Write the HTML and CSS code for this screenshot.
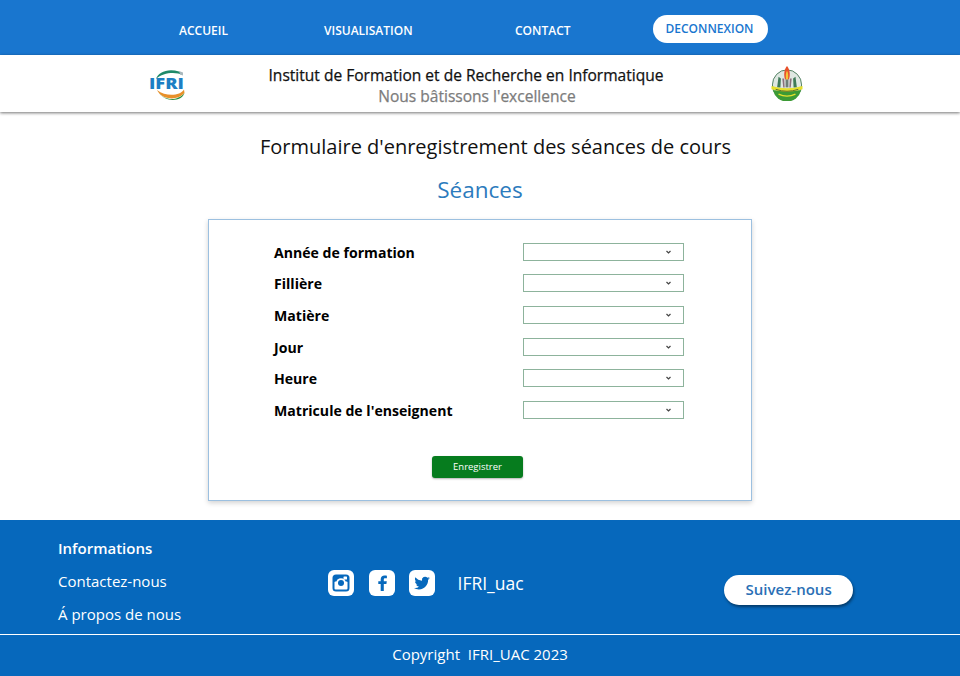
FILE: index.html
```html
<!DOCTYPE html>
<html lang="fr">
<head>
<meta charset="utf-8">
<title>Séances</title>
<link rel="stylesheet" href="styles.css">
</head>
<body>
<nav class="nav">
  <a class="nav-link">ACCUEIL</a>
  <a class="nav-link">VISUALISATION</a>
  <a class="nav-link">CONTACT</a>
  <a class="nav-btn">DECONNEXION</a>
</nav>
<header class="brand">
  <svg class="logo-ifri" width="38" height="32" viewBox="0 0 38 32">
    <path d="M8 11C10 4 20 0 31 3.500C33 4.500 34 5 35 7C27 3.500 15 4.500 8 11Z" fill="#1f8a6a"/>
    <path d="M31 3l4 1.500v3l-3-1Z" fill="#a9b8bd"/>
    <path d="M9 22C13 31 28 34 36.500 25L36 21.500C32 28 18 29 9 22Z" fill="#e8902a"/>
    <path d="M11 25C16 32 29 34 36.500 25C34 33.500 18 35 11 25Z" fill="#2f8f3e"/>
    <text class="logo-letters" x="1" y="20.500" textLength="35" lengthAdjust="spacingAndGlyphs">IFRI</text>
  </svg>
  <div class="brand-text">
    <div class="brand-name">Institut de Formation et de Recherche en Informatique</div>
    <div class="brand-motto">Nous bâtissons l'excellence</div>
  </div>
  <svg class="logo-uac" width="32" height="36" viewBox="0 0 34 37" preserveAspectRatio="none">
    <circle cx="17" cy="20.500" r="15.500" fill="#dfe8e2" stroke="#4d7d5e" stroke-width="1"/>
    <path d="M2 26h30a15.500 15.500 0 0 1-30 0Z" fill="#3c9a35"/>
    <path d="M8 12l-1.500 11h3.500l.5-9ZM26 12l1.500 11H24l-.5-9Z" fill="#3f7a58"/>
    <path d="M12 14l1 9h1.500l-.5-9ZM22 14l-1 9h-1.500l.5-9Z" fill="#8a6f7c"/>
    <path d="M17 1c3.500 4 3.500 10 2 14h-4c-1.500-4-1.500-10 2-14Z" fill="#e8502a"/>
    <path d="M17 6c1.500 2 1.500 6 1 9h-2c-.5-3-.5-7 1-9Z" fill="#f3c63a"/>
    <rect x="15.500" y="15" width="3" height="8" fill="#6e7f78"/>
    <path d="M.5 21.500q16.500 5 33 0v3.500q-16.500 5-33 0Z" fill="#e6e02e"/>
    <path d="M5 25q12 4 24 0" stroke="#5c6b2a" stroke-width="1" fill="none"/>
    <path d="M8 30q9 4 18 0" stroke="#e6e02e" stroke-width="1.500" fill="none"/>
  </svg>
</header>
<main class="main">
  <h1 class="title">Formulaire d'enregistrement des séances de cours</h1>
  <h2 class="subtitle">Séances</h2>
  <form class="card">
    <div class="row"><label class="label">Année de formation</label><span class="select"><svg class="chev" width="5" height="4" viewBox="0 0 5 4"><path d="M.5 1l2 2 2-2" fill="none" stroke="#444" stroke-width="1.200"/></svg></span></div>
    <div class="row"><label class="label">Fillière</label><span class="select"><svg class="chev" width="5" height="4" viewBox="0 0 5 4"><path d="M.5 1l2 2 2-2" fill="none" stroke="#444" stroke-width="1.200"/></svg></span></div>
    <div class="row"><label class="label">Matière</label><span class="select"><svg class="chev" width="5" height="4" viewBox="0 0 5 4"><path d="M.5 1l2 2 2-2" fill="none" stroke="#444" stroke-width="1.200"/></svg></span></div>
    <div class="row"><label class="label">Jour</label><span class="select"><svg class="chev" width="5" height="4" viewBox="0 0 5 4"><path d="M.5 1l2 2 2-2" fill="none" stroke="#444" stroke-width="1.200"/></svg></span></div>
    <div class="row"><label class="label">Heure</label><span class="select"><svg class="chev" width="5" height="4" viewBox="0 0 5 4"><path d="M.5 1l2 2 2-2" fill="none" stroke="#444" stroke-width="1.200"/></svg></span></div>
    <div class="row"><label class="label">Matricule de l'enseignent</label><span class="select"><svg class="chev" width="5" height="4" viewBox="0 0 5 4"><path d="M.5 1l2 2 2-2" fill="none" stroke="#444" stroke-width="1.200"/></svg></span></div>
    <button class="submit" type="button">Enregistrer</button>
  </form>
</main>
<footer class="footer">
  <div class="foot-top">
    <div class="foot-info">
      <div class="foot-head">Informations</div>
      <div class="foot-item">Contactez-nous</div>
      <div class="foot-item">Á propos de nous</div>
    </div>
    <div class="foot-social">
      <svg class="social" viewBox="0 0 26 26"><rect width="26" height="26" rx="6" fill="#fff"/><rect x="4.500" y="4.500" width="17" height="17" rx="3.500" fill="#0668bc"/><rect x="6.500" y="11.500" width="13" height="8" rx="1" fill="#fff"/><rect x="15.500" y="6.500" width="3.500" height="3" rx=".6" fill="#fff"/><circle cx="13" cy="13" r="4.800" fill="#fff"/><circle cx="13" cy="13" r="3" fill="#0668bc"/></svg>
      <svg class="social" viewBox="0 0 26 26"><rect width="26" height="26" rx="6" fill="#fff"/><path d="M14.800 21v-7h2.600l.4-2.800h-3V9.500c0-.8.3-1.300 1.400-1.300h1.700V5.700c-.5-.1-1.300-.2-2.300-.2-2.400 0-3.900 1.400-3.900 3.800v1.900H9.300V14h2.400v7Z" fill="#0668bc"/></svg>
      <svg class="social" viewBox="0 0 26 26"><rect width="26" height="26" rx="6" fill="#fff"/><path d="M21 8.300c-.6.300-1.200.4-1.900.5.700-.4 1.200-1 1.400-1.800-.6.400-1.300.6-2 .8a3.200 3.200 0 0 0-5.500 2.900c-2.700-.1-5-1.400-6.600-3.400-.9 1.500-.4 3.400 1 4.300-.5 0-1-.2-1.400-.4 0 1.600 1.100 2.900 2.600 3.200-.5.100-1 .1-1.400 0 .4 1.300 1.600 2.200 3 2.200A6.500 6.500 0 0 1 5 18c1.400.9 3.100 1.400 4.900 1.400 6 0 9.400-5 9.200-9.600.7-.4 1.400-.9 1.900-1.500Z" fill="#0668bc"/></svg>
      <span class="handle">IFRI_uac</span>
    </div>
    <a class="follow">Suivez-nous</a>
  </div>
  <div class="copyright">Copyright&nbsp; IFRI_UAC 2023</div>
</footer>
</body>
</html>
```

FILE: styles.css
```css
* { box-sizing: border-box; }
html, body { margin: 0; padding: 0; }
body {
  width: 960px;
  height: 676px;
  overflow: hidden;
  background: #fff;
  font-family: "Open Sans", sans-serif;
  display: flex;
  flex-direction: column;
}
.nav {
  height: 55px;
  background: #1976cf;
  display: grid;
  padding-left: 179px;
  grid-template-columns: 145px 191px 138px 1fr;
  align-items: center;
  padding-top: 5px;
}
.nav-link { color: #fff; font-size: 12px; font-weight: 600; }
.nav-btn {
  justify-self: start;
  width: 115px;
  height: 28px;
  margin-top: -3px;
  border-radius: 14px;
  background: #fff;
  color: #1976cf;
  font-size: 12px;
  font-weight: 600;
  display: flex;
  align-items: center;
  justify-content: center;
  padding-right: 2px;
}
.brand {
  height: 57px;
  background: #fff;
  box-shadow: 0 1px 3px rgba(0,0,0,.55);
  display: flex;
  align-items: center;
  padding-left: 148px;
  position: relative;
}
.logo-ifri { flex: none; }
.logo-letters { font-family: "Open Sans", sans-serif; font-size: 15px; font-weight: 800; fill: #1d7fc4; }
.brand-text { width: 396px; margin-left: 82px; text-align: center; white-space: nowrap; padding-top: 3px; }
.brand-name { font-size: 15.550px; font-weight: 400; -webkit-text-stroke: .25px #111; color: #111; line-height: 21px; padding-top: 2px; }
.brand-motto { font-size: 15.550px; font-weight: 400; -webkit-text-stroke: .25px #7c7c7c; color: #7c7c7c; line-height: 21px; padding-left: 22px; }
.logo-uac { flex: none; margin-left: 107px; margin-top: -1px; }
.main {
  flex: 1;
  display: flex;
  flex-direction: column;
  align-items: center;
}
.title { margin: 21px 0 0; padding-left: 31px; font-size: 20px; font-weight: 400; color: #111; line-height: 27px; }
.subtitle { margin: 15px 0 0; font-size: 22.500px; font-weight: 400; color: #2c7bbd; line-height: 30px; }
.card {
  width: 544px;
  height: 282px;
  margin-top: 14px;
  border: 1px solid #9cc0e0;
  box-shadow: 0 2px 5px rgba(0,0,0,.18);
  padding: 16px 67px 0 65px;
  display: flex;
  flex-direction: column;
}
.row {
  height: 31.600px;
  flex: none;
  display: flex;
  align-items: center;
  justify-content: space-between;
}
.label { font-size: 14.100px; font-weight: 700; color: #000; position: relative; top: .5px; }
.select {
  width: 161px;
  height: 18px;
  border: 1px solid #8db39c;
  display: flex;
  align-items: center;
  justify-content: flex-end;
  padding-right: 12px;
}
.chev { display: block; }
.submit {
  width: 91px;
  height: 22px;
  margin: 30px 0 0 158px;
  border: 0;
  border-radius: 3px;
  background: #067c1e;
  color: #fff;
  font: 400 9.500px "Open Sans", sans-serif;
  box-shadow: 0 1px 2px rgba(0,0,0,.3);
  padding: 0;
}
.footer {
  height: 156px;
  background: #0668bc;
  color: #fff;
  display: flex;
  flex-direction: column;
}
.foot-top {
  height: 115px;
  border-bottom: 1px solid #fff;
  display: flex;
  position: relative;
  padding-left: 58px;
}
.foot-info { width: 270px; padding-top: 18px; }
.foot-head { font-size: 15px; font-weight: 600; line-height: 21px; }
.foot-item { font-size: 15px; line-height: 21px; margin-top: 12px; }
.foot-social { display: flex; align-items: center; gap: 14.500px; height: 26px; margin-top: 50px; }
.social { width: 26px; height: 26px; flex: none; }
.handle { font-size: 17.500px; margin-left: 8px; }
.follow {
  width: 129px;
  height: 30px;
  margin: 55px 0 0 200px;
  background: #fff;
  border-radius: 15px;
  color: #2a6fb5;
  font-size: 15px;
  font-weight: 600;
  display: flex;
  align-items: center;
  justify-content: center;
  padding: 0 0 2px 1px;
  box-shadow: 1px 2px 3px rgba(0,0,0,.45);
}
.copyright { flex: 1; display: flex; align-items: center; justify-content: center; font-size: 15px; padding-bottom: 3px; }
```
